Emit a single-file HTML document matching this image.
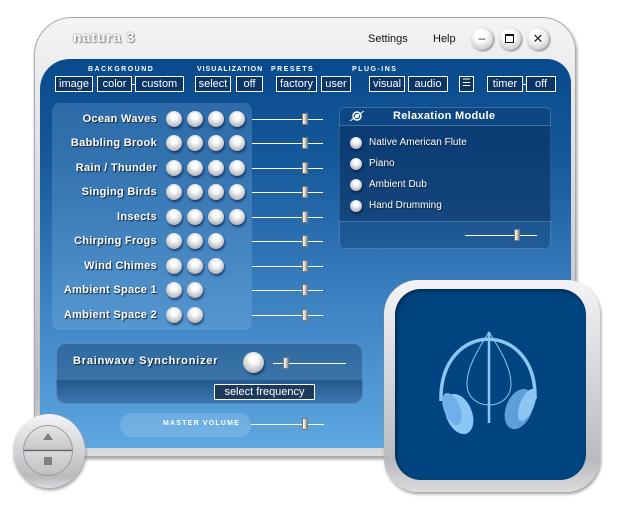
<!DOCTYPE html><html><head><style>
*{margin:0;padding:0;box-sizing:border-box}
body{width:632px;height:513px;background:#fff;position:relative;overflow:hidden;font-family:"Liberation Sans",sans-serif}
.a{position:absolute}
.silver{background:linear-gradient(180deg,#f4f4f6,#d2d3d6 50%,#b9babd 85%,#dcdcde);}
.btn{position:absolute;top:76px;height:16px;border:1px solid #fff;background:#0b3566;color:#fff;font-size:11px;line-height:14px;text-align:center}
.hd{position:absolute;top:66px;color:#fff;font-size:7px;font-weight:bold;letter-spacing:1.5px}
.lbl{position:absolute;right:475px;color:#fff;font-size:11px;font-weight:bold;text-shadow:1px 1px 1px #123;white-space:nowrap;letter-spacing:.3px}
.ball{position:absolute;width:16px;height:16px;border-radius:50%;background:radial-gradient(circle at 50% 35%,#fff 20%,#d0d2d6 55%,#8f949b 100%);box-shadow:1px 2px 2px rgba(0,20,60,.6)}
.line{position:absolute;height:1px;background:#fff}
.th{position:absolute;width:6px;height:12px;background:linear-gradient(90deg,#fff,#c8c8c8 60%,#888);border:1px solid #777}
.rt{position:absolute;left:369px;color:#fff;font-size:10px;text-shadow:1px 1px 1px #123}
</style></head><body>
<div class="a silver" style="left:34px;top:17px;width:542px;height:440px;border-radius:38px 34px 30px 30px;box-shadow:1px 2px 3px #999;border:1px solid #aaa"></div>
<div class="a" style="left:40px;top:59px;width:531px;height:389px;border-radius:30px 24px 26px 28px;background:linear-gradient(180deg,#084a8c 0%,#15589a 25%,#3a7fbf 60%,#5ea7e0 100%)"></div>
<div class="a silver" style="left:13px;top:414px;width:72px;height:74px;border-radius:50%;box-shadow:1px 2px 3px #999"></div>
<div class="a" style="left:23px;top:425px;width:50px;height:51px;border-radius:50%;background:linear-gradient(180deg,#e4e4e6,#c6c7ca 48%,#5f6266 49%,#6a6d70 51%,#d8d9db 52%,#bfc0c3);border:1px solid #9a9a9a"></div>
<div class="a" style="left:43px;top:433px;width:0;height:0;border-left:5px solid transparent;border-right:5px solid transparent;border-bottom:7px solid #7d7f82"></div>
<div class="a" style="left:44px;top:457px;width:8px;height:8px;background:#7d7f82"></div>
<div class="a silver" style="left:384px;top:280px;width:216px;height:212px;border-radius:34px;box-shadow:1px 2px 3px #999"></div>
<div class="a" style="left:395px;top:289px;width:191px;height:191px;border-radius:26px;background:#00457f;box-shadow:inset 2px 2px 4px #002a55"></div>
<svg class="a" style="left:395px;top:289px" width="191" height="191" viewBox="0 0 191 191">
<g fill="none" stroke="#8cc6f5">
<path d="M46 112 C44 30 142 30 140 110" stroke-width="3.5"/>
<path d="M94 43 C80 65 72 80 72 95 C72 108 82 116 94 116 C106 116 116 108 116 95 C116 80 108 65 94 43Z" stroke-width="1"/>
<path d="M94 43 L94 134" stroke-width="2.5"/>
</g>
<ellipse cx="64" cy="125" rx="13" ry="21" transform="rotate(-22 64 125)" fill="#8cc6f5"/>
<ellipse cx="57" cy="120" rx="8" ry="17" transform="rotate(-22 57 120)" fill="#6fb0ea"/>
<ellipse cx="124" cy="120" rx="13" ry="21" transform="rotate(22 124 120)" fill="#5d9fd9"/>
<ellipse cx="132" cy="116" rx="7" ry="17" transform="rotate(22 132 116)" fill="#8cc6f5"/>
</svg>
<div class="a" style="left:73px;top:29px;color:#fff;font-size:14px;font-weight:bold;letter-spacing:1px;text-shadow:0 0 2px #777,1px 1px 1px #888">natura 3</div>
<div class="a" style="left:368px;top:33px;font-size:11px;color:#111">Settings</div>
<div class="a" style="left:433px;top:33px;font-size:11px;color:#111">Help</div>
<div class="a" style="left:471px;top:28px;width:22px;height:22px;border-radius:50%;background:radial-gradient(circle at 45% 35%,#fff 30%,#bbb 90%);box-shadow:1px 1px 2px #777;text-align:center;font-size:12px;line-height:21px;color:#222">–</div>
<div class="a" style="left:499px;top:28px;width:22px;height:22px;border-radius:50%;background:radial-gradient(circle at 45% 35%,#fff 30%,#bbb 90%);box-shadow:1px 1px 2px #777"><div style="margin:6px 0 0 6px;width:9px;height:9px;border:1px solid #111;border-top-width:2px"></div></div>
<div class="a" style="left:527px;top:28px;width:22px;height:22px;border-radius:50%;background:radial-gradient(circle at 45% 35%,#fff 30%,#bbb 90%);box-shadow:1px 1px 2px #777;text-align:center;font-size:13px;line-height:21px;color:#222">✕</div>
<div class="hd" style="left:88px">BACKGROUND</div>
<div class="hd" style="left:197px;letter-spacing:1px">VISUALIZATION</div>
<div class="hd" style="left:271px">PRESETS</div>
<div class="hd" style="left:352px">PLUG-INS</div>
<div class="btn" style="left:55px;width:38px">image</div>
<div class="btn" style="left:97px;width:35px">color</div>
<div class="a" style="left:132px;top:84px;width:3px;height:1px;background:#fff"></div>
<div class="btn" style="left:135px;width:49px">custom</div>
<div class="btn" style="left:195px;width:36px">select</div>
<div class="btn" style="left:236px;width:27px">off</div>
<div class="btn" style="left:276px;width:41px">factory</div>
<div class="btn" style="left:321px;width:30px">user</div>
<div class="btn" style="left:369px;width:36px">visual</div>
<div class="btn" style="left:408px;width:40px">audio</div>
<div class="btn" style="left:459px;width:15px;font-size:10px;line-height:13px">☰</div>
<div class="btn" style="left:487px;width:36px">timer</div>
<div class="a" style="left:523px;top:84px;width:3px;height:1px;background:#fff"></div>
<div class="btn" style="left:526px;width:30px">off</div>
<div class="a" style="left:52px;top:103px;width:200px;height:227px;border-radius:8px;background:rgba(140,190,235,.25)"></div>
<div class="lbl" style="top:113px">Ocean Waves</div>
<div class="lbl" style="top:137px">Babbling Brook</div>
<div class="lbl" style="top:162px">Rain / Thunder</div>
<div class="lbl" style="top:186px">Singing Birds</div>
<div class="lbl" style="top:211px">Insects</div>
<div class="lbl" style="top:235px">Chirping Frogs</div>
<div class="lbl" style="top:260px">Wind Chimes</div>
<div class="lbl" style="top:284px">Ambient Space 1</div>
<div class="lbl" style="top:309px">Ambient Space 2</div>
<div id="balls"></div>
<script>
var ys=[119,143,168,192,217,241,266,290,315],n=[4,4,4,4,4,3,3,2,2],xs=[174,195,216,237],h='';
for(var i=0;i<9;i++){for(var j=0;j<n[i];j++)h+='<div class="ball" style="left:'+(xs[j]-8)+'px;top:'+(ys[i]-8)+'px"></div>';
h+='<div class="line" style="left:252px;width:71px;top:'+ys[i]+'px"></div><div class="th" style="left:302px;top:'+(ys[i]-6)+'px"></div>';}
document.getElementById('balls').innerHTML=h;
</script>
<div class="a" style="left:339px;top:107px;width:212px;height:142px;border-radius:5px;background:rgba(10,50,100,.35);border:1px solid rgba(150,190,230,.35)"></div>
<div class="a" style="left:339px;top:125px;width:212px;height:97px;background:rgba(8,40,85,.35);border-top:1px solid rgba(150,190,230,.4);border-bottom:1px solid rgba(150,190,230,.4)"></div>
<div class="a" style="left:393px;top:110px;color:#fff;font-size:11px;font-weight:bold;letter-spacing:.3px">Relaxation Module</div>
<svg class="a" style="left:348px;top:109px" width="18" height="14"><circle cx="9" cy="7" r="4" fill="none" stroke="#fff" stroke-width="1.5"/><circle cx="9" cy="7" r="2" fill="#fff"/><path d="M2 12 L16 2" stroke="#fff"/></svg>
<div class="ball" style="left:350px;top:137px;width:12px;height:12px"></div><div class="rt" style="top:137px">Native American Flute</div>
<div class="ball" style="left:350px;top:158px;width:12px;height:12px"></div><div class="rt" style="top:158px">Piano</div>
<div class="ball" style="left:350px;top:179px;width:12px;height:12px"></div><div class="rt" style="top:179px">Ambient Dub</div>
<div class="ball" style="left:350px;top:200px;width:12px;height:12px"></div><div class="rt" style="top:200px">Hand Drumming</div>
<div class="line" style="left:465px;width:72px;top:235px"></div><div class="th" style="left:514px;top:229px"></div>
<div class="a" style="left:56px;top:343px;width:307px;height:61px;border-radius:10px;background:linear-gradient(180deg,#2e6aa0 0%,#3a73a8 60%,#24598c 62%,#3c78b0 100%);border:1px solid rgba(140,180,220,.4)"></div>
<div class="a" style="left:73px;top:355px;color:#fff;font-size:11px;font-weight:bold;letter-spacing:.8px;text-shadow:1px 1px 1px #123">Brainwave Synchronizer</div>
<div class="ball" style="left:243px;top:352px;width:21px;height:21px"></div>
<div class="line" style="left:273px;width:73px;top:363px"></div><div class="th" style="left:283px;top:357px"></div>
<div class="btn" style="left:214px;top:384px;width:101px;background:#1c3a5c">select frequency</div>
<div class="a" style="left:120px;top:413px;width:131px;height:24px;border-radius:12px;background:rgba(170,210,245,.3)"></div>
<div class="a" style="left:163px;top:420px;color:#fff;font-size:7px;font-weight:bold;letter-spacing:1.2px">MASTER VOLUME</div>
<div class="line" style="left:251px;width:73px;top:424px"></div><div class="th" style="left:302px;top:418px"></div>
</body></html>
